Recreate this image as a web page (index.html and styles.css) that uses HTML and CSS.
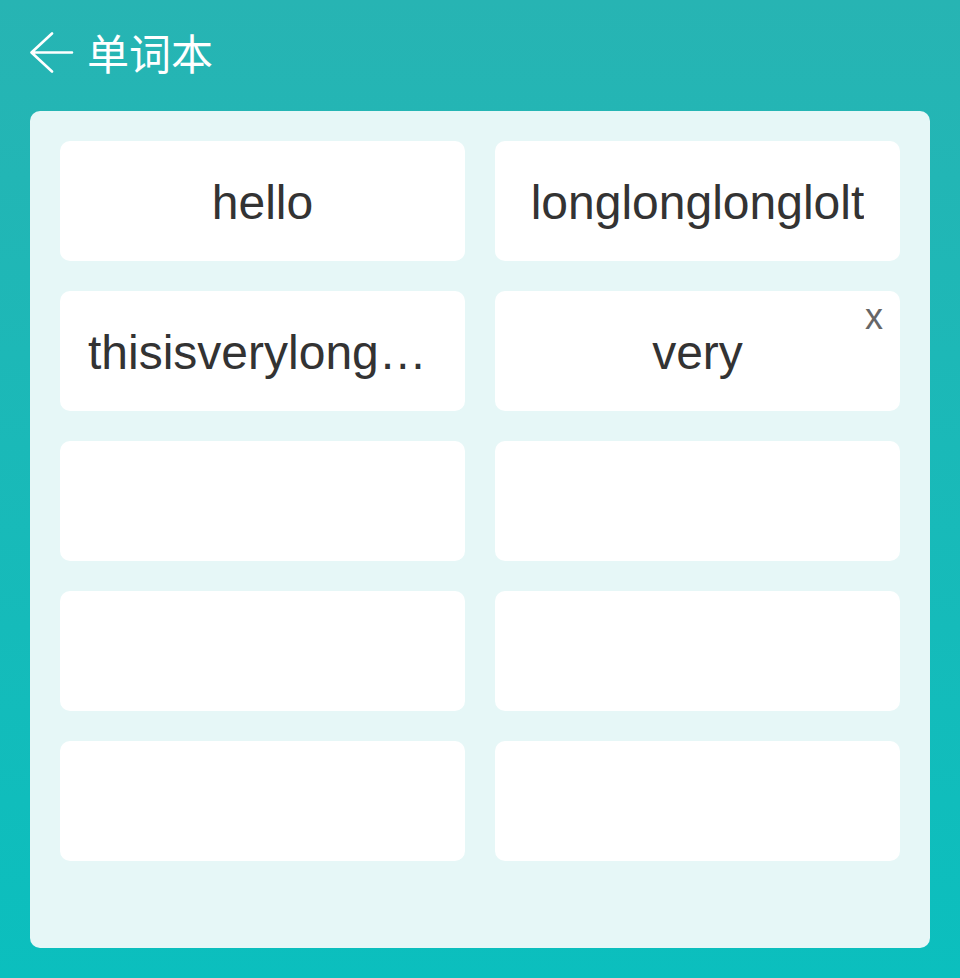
FILE: index.html
```html
<!DOCTYPE html>
<html lang="zh">
<head>
<meta charset="utf-8">
<title>单词本</title>
<link rel="stylesheet" href="styles.css">
</head>
<body>
<div class="page">
  <header class="header">
    <svg class="back" width="44" height="44" viewBox="0 0 44 44" aria-hidden="true">
      <path d="M22 1.5 L1.5 20.5 L22 39.5 M1.5 20.5 L42 20.5" fill="none" stroke="#fff" stroke-width="2.6" stroke-linecap="round" stroke-linejoin="round"/>
    </svg>
    <h1 class="title">单词本</h1>
  </header>
  <main class="panel">
    <div class="grid">
      <div class="card"><span class="word">hello</span></div>
      <div class="card"><span class="word">longlonglonglolt</span></div>
      <div class="card"><span class="word">thisisverylongword</span></div>
      <div class="card"><span class="word">very</span><span class="close">x</span></div>
      <div class="card"></div>
      <div class="card"></div>
      <div class="card"></div>
      <div class="card"></div>
      <div class="card"></div>
      <div class="card"></div>
    </div>
  </main>
</div>
</body>
</html>
```
FILE: styles.css
```css
html, body {
  margin: 0;
  padding: 0;
  height: 100%;
}
body {
  background: linear-gradient(180deg, #27b4b3 0%, #0bbfbe 100%);
  font-family: "Liberation Sans", Arial, "Noto Sans CJK SC", sans-serif;
}
.page {
  height: 978px;
  display: flex;
  flex-direction: column;
  box-sizing: border-box;
  padding: 0 30px 30px;
}
.header {
  height: 111px;
  display: flex;
  align-items: center;
  gap: 13px;
  padding-bottom: 8px;
  box-sizing: border-box;
}
.back {
  display: block;
  margin-top: 4px;
}
.title {
  margin: 0;
  font-family: "Noto Sans CJK SC", sans-serif;
  font-weight: 400;
  font-size: 42px;
  line-height: 1;
  color: #fff;
}
.panel {
  flex: 1;
  background: #e6f7f7;
  border-radius: 10px;
  padding: 30px;
  box-sizing: border-box;
}
.grid {
  display: grid;
  grid-template-columns: 1fr 1fr;
  grid-auto-rows: 120px;
  gap: 30px;
}
.card {
  position: relative;
  background: #fff;
  border-radius: 10px;
  display: flex;
  align-items: center;
  justify-content: center;
  padding: 0 28px 0 28px;
  min-width: 0;
}
.word {
  display: block;
  max-width: 100%;
  font-size: 48px;
  line-height: 120px;
  color: #333;
  white-space: nowrap;
  overflow: hidden;
  text-overflow: ellipsis;
  padding-top: 3px;
}
.close {
  position: absolute;
  top: 8px;
  right: 17px;
  font-size: 36px;
  line-height: 1;
  color: #666;
}
```
